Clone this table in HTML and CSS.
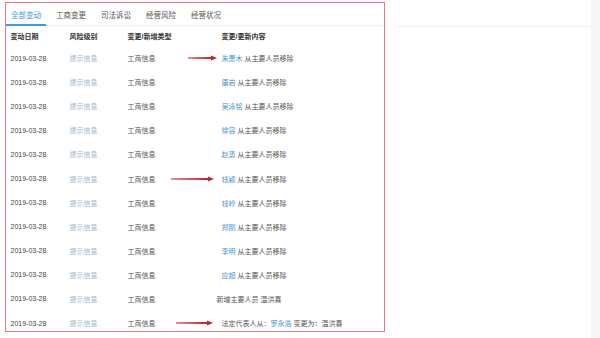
FILE: index.html
```html
<!DOCTYPE html>
<html lang="zh">
<head>
<meta charset="utf-8">
<link rel="stylesheet" href="styles.css">
</head>
<body>
<div class="panel">
  <div class="tabs">
    <div class="tab active">全部变动</div>
    <div class="tab">工商变更</div>
    <div class="tab">司法诉讼</div>
    <div class="tab">经营风险</div>
    <div class="tab">经营状况</div>
  </div>
  <div class="row head">
    <div>变动日期</div><div>风险级别</div><div>变更/新增类型</div><div>变更/更新内容</div>
  </div>
  <div class="row">
    <div class="date">2019-03-28</div><div class="lvl">提示信息</div><div>工商信息</div>
    <div><span class="name">朱萧木</span> 从主要人员移除</div>
    <svg class="arrow a1" viewBox="0 0 29 6"><polygon points="0,2.6 23,2.1 23,0.4 29,3 23,5.6 23,3.9 0,3.4"/></svg>
  </div>
  <div class="row">
    <div class="date">2019-03-28</div><div class="lvl">提示信息</div><div>工商信息</div>
    <div><span class="name">唐岩</span> 从主要人员移除</div>
  </div>
  <div class="row">
    <div class="date">2019-03-28</div><div class="lvl">提示信息</div><div>工商信息</div>
    <div><span class="name">吴泳铭</span> 从主要人员移除</div>
  </div>
  <div class="row">
    <div class="date">2019-03-28</div><div class="lvl">提示信息</div><div>工商信息</div>
    <div><span class="name">徐容</span> 从主要人员移除</div>
  </div>
  <div class="row">
    <div class="date">2019-03-28</div><div class="lvl">提示信息</div><div>工商信息</div>
    <div><span class="name">赵勇</span> 从主要人员移除</div>
  </div>
  <div class="row">
    <div class="date">2019-03-28</div><div class="lvl">提示信息</div><div>工商信息</div>
    <div><span class="name">钱颖</span> 从主要人员移除</div>
    <svg class="arrow a2" viewBox="0 0 43 6"><polygon points="0,2.6 37,2.1 37,0.4 43,3 37,5.6 37,3.9 0,3.4"/></svg>
  </div>
  <div class="row">
    <div class="date">2019-03-28</div><div class="lvl">提示信息</div><div>工商信息</div>
    <div><span class="name">钱岭</span> 从主要人员移除</div>
  </div>
  <div class="row">
    <div class="date">2019-03-28</div><div class="lvl">提示信息</div><div>工商信息</div>
    <div><span class="name">郑刚</span> 从主要人员移除</div>
  </div>
  <div class="row">
    <div class="date">2019-03-28</div><div class="lvl">提示信息</div><div>工商信息</div>
    <div><span class="name">李明</span> 从主要人员移除</div>
  </div>
  <div class="row">
    <div class="date">2019-03-28</div><div class="lvl">提示信息</div><div>工商信息</div>
    <div><span class="name">应超</span> 从主要人员移除</div>
  </div>
  <div class="row">
    <div class="date">2019-03-28</div><div class="lvl">提示信息</div><div>工商信息</div>
    <div class="shift">新增主要人员 温洪喜</div>
  </div>
  <div class="row">
    <div class="date">2019-03-28</div><div class="lvl">提示信息</div><div>工商信息</div>
    <div>法定代表人从：<span class="name">罗永浩</span> 变更为：温洪喜</div>
    <svg class="arrow a3" viewBox="0 0 37 6"><polygon points="0,2.6 31,2.1 31,0.4 37,3 31,5.6 31,3.9 0,3.4"/></svg>
  </div>
</div>
<div class="side">
  <div class="side-head"></div>
</div>
<div class="scroll"></div>
</body>
</html>
```

FILE: styles.css
```css
html, body {
  margin: 0;
  padding: 0;
  background: #ffffff;
}
body {
  display: flex;
  width: 600px;
  height: 338px;
  overflow: hidden;
  font-family: "Liberation Sans", "Noto Sans CJK SC", sans-serif;
  font-size: 7px;
  color: #555555;
}
.panel {
  margin: 2px 0 0 5px;
  width: 380px;
  height: 330px;
  box-sizing: border-box;
  border: 1.5px solid #e27b82;
  overflow: hidden;
  flex-shrink: 0;
}
.tabs {
  display: flex;
  gap: 5px;
  height: 23px;
  box-sizing: border-box;
  border-bottom: 1px solid #eeeeee;
}
.tab {
  height: 23px;
  box-sizing: border-box;
  padding: 0 5px;
  display: flex;
  align-items: center;
  font-size: 7.5px;
  color: #555555;
}
.tab.active {
  color: #3c9be0;
  border-bottom: 2px solid #3c9be0;
  padding-top: 2px;
}
.row {
  position: relative;
  display: grid;
  grid-template-columns: 59px 58px 94px 1fr;
  align-items: center;
  padding-left: 4.5px;
  height: 24.1px;
  white-space: nowrap;
}
.row.head {
  height: 20px;
  font-weight: bold;
  color: #333333;
}
.date {
  color: #444444;
}
.lvl {
  color: #97b6cf;
}
.name {
  color: #4596d6;
}
.shift {
  margin-left: -5px;
}
.arrow {
  position: absolute;
  top: 50%;
  height: 6px;
  margin-top: -3px;
  fill: #c4262b;
}
.a1 { left: 181.5px; width: 29px; }
.a2 { left: 165px; width: 43px; }
.a3 { left: 170px; width: 37px; }
.side {
  flex: 1;
  margin-left: 11px;
}
.side-head {
  height: 26px;
  border-bottom: 1px solid #f0f0f0;
}
.scroll {
  width: 9px;
  background: #f6f6f6;
}
```
